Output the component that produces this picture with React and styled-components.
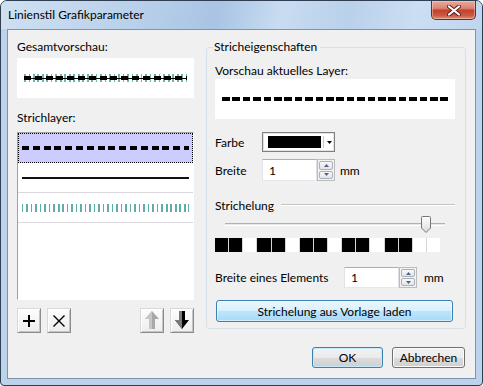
import React from "react"
import styled, { createGlobalStyle } from "styled-components"

const GlobalStyle = createGlobalStyle`
  * { box-sizing: border-box; }
  body {
    margin: 0;
    font-family: Lato, "Liberation Sans", sans-serif;
    font-size: 12px;
    color: #000;
  }
`

const Window = styled.div`
  width: 483px;
  height: 386px;
  display: flex;
  flex-direction: column;
  border: 1px solid #2f3e50;
  border-radius: 7px 7px 4px 4px;
  background: #bcd3eb;
  overflow: hidden;
`

const TitleBar = styled.div`
  height: 28px;
  flex: none;
  display: flex;
  align-items: flex-start;
  background: linear-gradient(100deg, #cfe0f2 0%, #c3d8ee 15%, #b4cde8 33%, #a9c4e4 45%, #c8dcf1 58%, #bad1eb 72%, #cbdef2 86%, #c0d6ee 100%);
`

const Title = styled.div`
  padding-left: 7px;
  line-height: 28px;
`

const CloseButton = styled.div`
  margin-left: auto;
  margin-right: 6px;
  width: 45px;
  height: 19px;
  display: flex;
  align-items: center;
  justify-content: center;
  border: 1px solid #6b2b22;
  border-top: none;
  border-radius: 0 0 5px 5px;
  background: linear-gradient(180deg, #e9a99b 0%, #d98672 40%, #c4402c 52%, #c85a45 80%, #e08f74 100%);
  box-shadow: inset 0 0 0 1px rgba(255, 220, 210, 0.45);
`

const Client = styled.div`
  flex: 1;
  margin: 0 6px 6px;
  border: 1px solid #7d94b0;
  background: #f0f0f0;
  padding: 9px 9px 0 9px;
  display: flex;
  flex-direction: column;
`

const Columns = styled.div`
  display: flex;
  gap: 12px;
  align-items: flex-start;
`

const LeftCol = styled.div`
  width: 177px;
  display: flex;
  flex-direction: column;
`

const Label = styled.div`
  line-height: 16px;
  height: 16px;
  margin-top: ${p => p.$top || 0}px;
  white-space: nowrap;
`

const Preview = styled.div`
  height: 40px;
  margin-top: ${p => p.$top || 0}px;
  background: #fff;
  display: flex;
  align-items: center;
  padding: 0 ${p => p.$pad}px;
`

const patterns = {
  dash: "repeating-linear-gradient(90deg, #000 0 7px, transparent 7px 10.8px)",
  wide: "repeating-linear-gradient(90deg, #000 0 7.5px, transparent 7.5px 10.4px)",
  solid: "#111",
  ticks: "repeating-linear-gradient(90deg, #62aea6 0 1.5px, transparent 1.5px 4.5px)",
  mix:
    "linear-gradient(#000, #000) center / 100% 1px no-repeat, " +
    "repeating-linear-gradient(90deg, #000 0 7px, transparent 7px 10.8px) center / 100% 4px no-repeat, " +
    "repeating-linear-gradient(90deg, #6fb3ac 0 1.5px, transparent 1.5px 4.5px)",
}

const heights = { dash: 4, wide: 4, solid: 2, ticks: 8, mix: 8 }

const Stroke = styled.div`
  flex: 1;
  height: ${p => heights[p.$kind]}px;
  background: ${p => patterns[p.$kind]};
`

const LayerList = styled.div`
  height: 168px;
  margin-top: 6px;
  background: #fff;
  border: 1px solid;
  border-color: #a0a0a0 #fff #fff #a0a0a0;
`

const LayerRow = styled.div`
  height: 30px;
  display: flex;
  align-items: center;
  padding: 0 4px;
  border-bottom: 1px solid #d9d9d9;
  background: ${p => (p.$selected ? "#ccccff" : "#fff")};
  outline: ${p => (p.$selected ? "1px dotted #000" : "none")};
  outline-offset: -1px;
`

const ToolBar = styled.div`
  display: flex;
  justify-content: space-between;
  margin-top: 8px;
`

const ToolGroup = styled.div`
  display: flex;
  gap: 6px;
`

const ToolButton = styled.div`
  width: 24px;
  height: 25px;
  display: flex;
  align-items: center;
  justify-content: center;
  border: 1px solid;
  border-color: #d8d8d8 #8c8c8c #8c8c8c #d8d8d8;
  background: linear-gradient(#fdfdfd, #ededed);
  box-shadow: inset 1px 1px 0 #fff, inset -1px -1px 0 #c4c4c4;
`

const Group = styled.fieldset`
  width: 260px;
  min-width: 0;
  margin: 0;
  padding: 0 10px 6px 8px;
  border: 1px solid #d5dfe5;
  border-radius: 3px;
  display: flex;
  flex-direction: column;
`

const Legend = styled.legend`
  margin-left: -2px;
  padding: 0 3px 0 1px;
  line-height: 16px;
`

const FieldRow = styled.div`
  display: flex;
  align-items: center;
  height: ${p => p.$h}px;
  margin-top: ${p => p.$top}px;
`

const FieldLabel = styled.div`
  width: ${p => p.$w}px;
  flex: none;
`

const ColorCombo = styled.div`
  width: 73px;
  height: 20px;
  display: flex;
  border: 1px solid #7f7f7f;
  background: #fff;
  box-shadow: inset 0 0 0 1px #e4e4e4;
  padding: 3px 0 3px 5px;
`

const Swatch = styled.div`
  width: 53px;
  background: ${p => p.$color};
`

const ComboArrow = styled.div`
  flex: 1;
  margin-left: 2px;
  border-left: 1px solid #c8c8c8;
  display: flex;
  align-items: center;
  justify-content: center;
`

const NumInput = styled.input`
  width: ${p => p.$w}px;
  height: 100%;
  margin: 0;
  padding: 0 0 0 6px;
  font: inherit;
  color: #000;
  background: #fff;
  border: 1px solid;
  border-color: #abadb3 #dbdfe6 #e3e9ef #e2e3ea;
  outline: none;
`

const Spinner = styled.div`
  width: 18px;
  height: 100%;
  display: flex;
  flex-direction: column;
  gap: 1px;
  padding: 1px;
  border: 1px solid #bcbcbc;
  background: #f2f2f2;
`

const SpinButton = styled.div`
  flex: 1;
  display: flex;
  align-items: center;
  justify-content: center;
  border: 1px solid #a9b1bc;
  border-radius: 2px;
  background: linear-gradient(#f8f8f8, #e2e4e8);
`

const Unit = styled.div`
  margin-left: ${p => p.$gap}px;
`

const SectionHead = styled.div`
  display: flex;
  align-items: center;
  gap: 7px;
  height: 16px;
  margin-top: 16px;
  &::after {
    content: "";
    flex: 1;
    border-top: 1px solid #c4c4c4;
    border-bottom: 1px solid #fff;
  }
`

const Slider = styled.div`
  position: relative;
  height: 17px;
  margin-top: 3px;
  display: flex;
  align-items: center;
  padding: 0 10px;
`

const Track = styled.div`
  flex: 1;
  height: 3px;
  border-top: 1px solid #b0b0b0;
  background: #e6e6e6;
  border-bottom: 1px solid #fff;
`

const Thumb = styled.svg`
  position: absolute;
  top: 0;
  left: calc(10px + ${p => p.$pos} * (100% - 20px) - 5px);
`

const Pattern = styled.div`
  width: 225px;
  height: 14px;
  margin-top: 5px;
  display: grid;
  grid-template-columns: repeat(16, 1fr);
  gap: 1px;
  background: #d6d6d6;
`

const Cell = styled.div`
  background: ${p => (p.$on ? "#000" : "#fff")};
`

const BlueButton = styled.div`
  height: 22px;
  margin: 12px 0 0 1px;
  width: 237px;
  display: flex;
  align-items: center;
  justify-content: center;
  border: 1px solid #3c7fb1;
  border-radius: 3px;
  background: linear-gradient(#eaf6fd 0%, #d9f0fc 50%, #bee6fd 50%, #a7d9f5 100%);
  box-shadow: inset 0 0 0 1px rgba(255, 255, 255, 0.55);
`

const Footer = styled.div`
  display: flex;
  justify-content: flex-end;
  gap: 9px;
  margin-top: 14px;
  padding-right: 1px;
`

const DialogButton = styled.div`
  width: ${p => p.$w}px;
  height: 21px;
  display: flex;
  align-items: center;
  justify-content: center;
  border: 1px solid ${p => (p.$default ? "#3c7fb1" : "#707070")};
  border-radius: 3px;
  background: linear-gradient(#f2f2f2 0%, #ebebeb 50%, #dddddd 50%, #cfcfcf 100%);
  box-shadow: inset 0 0 0 1px ${p => (p.$default ? "#c3ebfb" : "#fbfbfb")};
`

const SpinArrow = ({ up }) => (
  <svg width="5" height="3" viewBox="0 0 5 3">
    <path d={up ? "M0 3 L2.5 0 L5 3 Z" : "M0 0 L5 0 L2.5 3 Z"} fill="#4d6289" />
  </svg>
)

function NumberField({ w }) {
  return (
    <>
      <NumInput $w={w} readOnly defaultValue="1" />
      <Spinner>
        <SpinButton><SpinArrow up /></SpinButton>
        <SpinButton><SpinArrow /></SpinButton>
      </Spinner>
    </>
  )
}

const dashCells = [1, 1, 0, 1, 1, 0, 1, 1, 0, 1, 1, 0, 1, 1, 0, 0]

export default function App() {
  return (
    <>
      <GlobalStyle />
      <Window>
        <TitleBar>
          <Title>Linienstil Grafikparameter</Title>
          <CloseButton>
            <svg width="14" height="11" viewBox="0 0 14 11">
              <path d="M2 1.5 L12 9.5 M12 1.5 L2 9.5" stroke="#5a1f18" strokeWidth="4" strokeLinecap="round" />
              <path d="M2 1.5 L12 9.5 M12 1.5 L2 9.5" stroke="#fff" strokeWidth="2.2" strokeLinecap="round" />
            </svg>
          </CloseButton>
        </TitleBar>

        <Client>
          <Columns>
            <LeftCol>
              <Label>Gesamtvorschau:</Label>
              <Preview $top={3} $pad={7}>
                <Stroke $kind="mix" />
              </Preview>

              <Label $top={12}>Strichlayer:</Label>
              <LayerList>
                <LayerRow $selected><Stroke $kind="dash" /></LayerRow>
                <LayerRow><Stroke $kind="solid" /></LayerRow>
                <LayerRow><Stroke $kind="ticks" /></LayerRow>
              </LayerList>

              <ToolBar>
                <ToolGroup>
                  <ToolButton>
                    <svg width="14" height="14" viewBox="0 0 14 14">
                      <path d="M7 1 V13 M1 7 H13" stroke="#000" strokeWidth="2" />
                    </svg>
                  </ToolButton>
                  <ToolButton>
                    <svg width="14" height="14" viewBox="0 0 14 14">
                      <path d="M1.5 1.5 L12.5 12.5 M12.5 1.5 L1.5 12.5" stroke="#000" strokeWidth="1.4" />
                    </svg>
                  </ToolButton>
                </ToolGroup>
                <ToolGroup>
                  <ToolButton>
                    <svg width="16" height="19" viewBox="0 0 16 19">
                      <path d="M8 0 L15 8 L11 8 L11 18 L5 18 L5 8 L1 8 Z" fill="#a8a8a8" />
                      <path d="M8 0 L1 8 L5 8 L5 18 L8 18 Z" fill="#c6c6c6" />
                    </svg>
                  </ToolButton>
                  <ToolButton>
                    <svg width="16" height="19" viewBox="0 0 16 19">
                      <path d="M5 0 L11 0 L11 9 L15 9 L8 18 L1 9 L5 9 Z" fill="#000" />
                      <path d="M5 0 L8 0 L8 18 L1 9 L5 9 Z" fill="#7a7a7a" />
                    </svg>
                  </ToolButton>
                </ToolGroup>
              </ToolBar>
            </LeftCol>

            <Group>
              <Legend>Stricheigenschaften</Legend>
              <Label $top={8}>Vorschau aktuelles Layer:</Label>
              <Preview $pad={7}>
                <Stroke $kind="wide" />
              </Preview>

              <FieldRow $h={20} $top={13}>
                <FieldLabel $w={47}>Farbe</FieldLabel>
                <ColorCombo>
                  <Swatch $color="#000" />
                  <ComboArrow>
                    <svg width="5" height="3" viewBox="0 0 5 3">
                      <path d="M0 0 L5 0 L2.5 3 Z" fill="#000" />
                    </svg>
                  </ComboArrow>
                </ColorCombo>
              </FieldRow>

              <FieldRow $h={22} $top={7}>
                <FieldLabel $w={47}>Breite</FieldLabel>
                <NumberField w={55} />
                <Unit $gap={5}>mm</Unit>
              </FieldRow>

              <SectionHead>Strichelung</SectionHead>
              <Slider>
                <Track />
                <Thumb $pos={0.915} width="10" height="17" viewBox="0 0 10 17">
                  <defs>
                    <linearGradient id="thumbFill" x1="0" y1="0" x2="0" y2="1">
                      <stop offset="0" stopColor="#fdfdfd" />
                      <stop offset="1" stopColor="#dcdcdc" />
                    </linearGradient>
                  </defs>
                  <path d="M1.5 0.5 H8.5 Q9.5 0.5 9.5 1.5 V12 L5 16.5 L0.5 12 V1.5 Q0.5 0.5 1.5 0.5 Z" fill="url(#thumbFill)" stroke="#767676" />
                </Thumb>
              </Slider>
              <Pattern>
                {dashCells.map((on, i) => (
                  <Cell key={i} $on={on} />
                ))}
              </Pattern>

              <FieldRow $h={21} $top={15}>
                <FieldLabel $w={129}>Breite eines Elements</FieldLabel>
                <NumberField w={55} />
                <Unit $gap={7}>mm</Unit>
              </FieldRow>

              <BlueButton>Strichelung aus Vorlage laden</BlueButton>
            </Group>
          </Columns>

          <Footer>
            <DialogButton $w={71} $default>OK</DialogButton>
            <DialogButton $w={73}>Abbrechen</DialogButton>
          </Footer>
        </Client>
      </Window>
    </>
  )
}
